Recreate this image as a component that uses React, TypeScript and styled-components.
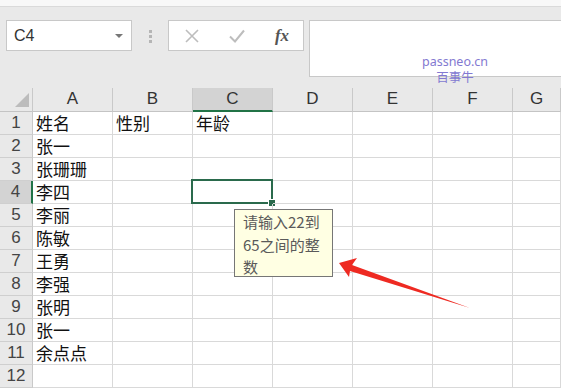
import styled, { createGlobalStyle } from 'styled-components'

const GlobalStyle = createGlobalStyle`
  body {
    margin: 0;
    background: #fff;
    font-family: "Liberation Sans", "Noto Sans CJK SC", sans-serif;
    overflow: hidden;
  }
`

const Page = styled.div`
  width: 561px;
  height: 390px;
  position: relative;
  overflow: hidden;
  display: flex;
  flex-direction: column;
`

const RibbonEdge = styled.div`
  height: 6px;
  background: #f8f8f8;
  border-bottom: 1px solid #dadada;
  flex: none;
`

const FormulaRow = styled.div`
  height: 81px;
  flex: none;
  box-sizing: border-box;
  background: #e9e9e9;
  display: flex;
  align-items: flex-start;
  padding: 13px 0 0 6px;
`

const NameBox = styled.div`
  width: 126px;
  height: 31px;
  box-sizing: border-box;
  background: #fff;
  border: 1px solid #c8c8c8;
  display: flex;
  align-items: center;
  justify-content: space-between;
  padding: 0 8px 0 7px;
  font-size: 16px;
  color: #333;
`

const Caret = styled.span`
  width: 0;
  height: 0;
  border-left: 4px solid transparent;
  border-right: 4px solid transparent;
  border-top: 4px solid #777;
`

const Grip = styled.div`
  width: 3px;
  margin: 10px 16px 0 17px;
  display: flex;
  flex-direction: column;
  gap: 2px;

  span {
    width: 3px;
    height: 3px;
    background: #b5b5b5;
  }
`

const ButtonsBox = styled.div`
  width: 136px;
  height: 31px;
  box-sizing: border-box;
  background: #fff;
  border: 1px solid #c8c8c8;
  display: flex;
  align-items: center;
  padding-left: 13px;
  gap: 25px;
`

const FxButton = styled.span`
  width: 20px;
  display: flex;
  justify-content: center;
  font-family: "Liberation Serif", serif;
  font-style: italic;
  font-weight: bold;
  font-size: 17px;
  color: #555;
`

const FormulaInput = styled.div`
  flex: 1;
  margin: 0 -2px 0 5px;
  height: 57px;
  box-sizing: border-box;
  background: #fff;
  border: 1px solid #c8c8c8;
`

const Watermark = styled.div`
  position: absolute;
  left: 415px;
  top: 54px;
  width: 80px;
  text-align: center;
  color: #8379d1;
  font-family: "Noto Sans", "Noto Sans CJK SC", sans-serif;
  font-size: 12.5px;
  line-height: 16px;
`

const Sheet = styled.div`
  flex: none;
  display: grid;
  grid-template-columns: 33px repeat(6, 80px) 1fr;
  grid-template-rows: 24px;
  grid-auto-rows: 23px;
`

const Corner = styled.div`
  background: #e9e9e9;
  border-right: 1px solid #c9c9c9;
  border-bottom: 1px solid #c4c4c4;
  display: flex;
  align-items: flex-end;
  justify-content: flex-end;
  padding: 0 3px 4px 0;
`

const ColHead = styled.div<{ $sel?: boolean }>`
  background: ${(p) => (p.$sel ? '#d3d3d3' : '#e9e9e9')};
  border-right: 1px solid #c9c9c9;
  border-bottom: ${(p) => (p.$sel ? '2px solid #217346' : '1px solid #c4c4c4')};
  display: flex;
  align-items: center;
  justify-content: center;
  font-size: 17px;
  line-height: 20px;
  color: #333;
  padding-bottom: 1px;
`

const RowHead = styled.div<{ $sel?: boolean }>`
  background: ${(p) => (p.$sel ? '#d3d3d3' : '#e9e9e9')};
  border-right: ${(p) => (p.$sel ? '2px solid #217346' : '1px solid #c9c9c9')};
  border-bottom: 1px solid #cfcfcf;
  display: flex;
  align-items: center;
  justify-content: center;
  font-size: 17px;
  line-height: 20px;
  color: #444;
`

const Cell = styled.div`
  position: relative;
  border-right: 1px solid #d9d9d9;
  border-bottom: 1px solid #d9d9d9;
  display: flex;
  align-items: center;
  padding-left: 3px;
  font-family: "Noto Sans CJK SC", sans-serif;
  font-size: 17px;
  line-height: 20px;
  color: #111;
  white-space: nowrap;
`

const ActiveFrame = styled.div`
  position: absolute;
  left: -2px;
  top: -2px;
  right: -1px;
  bottom: -1px;
  border: 2px solid #2a6a4c;
  pointer-events: none;

  &::after {
    content: '';
    position: absolute;
    right: -5px;
    bottom: -5px;
    width: 6px;
    height: 6px;
    background: #2a6a4c;
    border: 1px solid #fff;
  }
`

const Tip = styled.div`
  position: absolute;
  left: 234px;
  top: 209px;
  width: 99px;
  height: 68px;
  box-sizing: border-box;
  background: #ffffe3;
  border: 1px solid #767676;
  padding: 1px 0 0 8px;
  font-family: "Noto Sans CJK SC", sans-serif;
  font-size: 15px;
  line-height: 22.5px;
  color: #5a5a5a;
`

const Arrow = styled.svg`
  position: absolute;
  left: 330px;
  top: 250px;
`

const cols = ['A', 'B', 'C', 'D', 'E', 'F', 'G']
const rows: string[][] = [
  ['姓名', '性别', '年龄'],
  ['张一'],
  ['张珊珊'],
  ['李四'],
  ['李丽'],
  ['陈敏'],
  ['王勇'],
  ['李强'],
  ['张明'],
  ['张一'],
  ['余点点'],
  [],
]

export default function App() {
  return (
    <>
      <GlobalStyle />
      <Page>
        <RibbonEdge />
        <FormulaRow>
          <NameBox>
            C4
            <Caret />
          </NameBox>
          <Grip>
            <span />
            <span />
            <span />
          </Grip>
          <ButtonsBox>
            <svg width='20' height='20' viewBox='0 0 20 20'>
              <path d='M4 4 L16 16 M16 4 L4 16' stroke='#bdbdbd' strokeWidth='1.6' />
            </svg>
            <svg width='20' height='20' viewBox='0 0 20 20'>
              <path d='M3 10.5 L8 15.5 L17 4.5' stroke='#bdbdbd' strokeWidth='2' fill='none' />
            </svg>
            <FxButton>fx</FxButton>
          </ButtonsBox>
          <FormulaInput />
        </FormulaRow>

        <Sheet>
          <Corner>
            <svg width='14' height='14' viewBox='0 0 14 14'>
              <path d='M14 0 L14 14 L0 14 Z' fill='#bcbcbc' />
            </svg>
          </Corner>
          {cols.map((c) => (
            <ColHead key={c} $sel={c === 'C'}>
              {c}
            </ColHead>
          ))}
          {rows.map((r, i) => [
            <RowHead key={`h${i}`} $sel={i === 3}>
              {i + 1}
            </RowHead>,
            ...cols.map((c, j) => (
              <Cell key={`${c}${i}`}>
                {r[j] ?? ''}
                {i === 3 && c === 'C' && <ActiveFrame />}
              </Cell>
            )),
          ])}
        </Sheet>

        <Watermark>
          passneo.cn
          <br />
          百事牛
        </Watermark>

        <Tip>
          请输入22到
          <br />
          65之间的整
          <br />
          数
        </Tip>

        <Arrow width='150' height='70' viewBox='0 0 150 70'>
          <polygon points='9,13 27,8 22,15 140,58 20,21 19,27' fill='#ee2a22' />
        </Arrow>
      </Page>
    </>
  )
}
